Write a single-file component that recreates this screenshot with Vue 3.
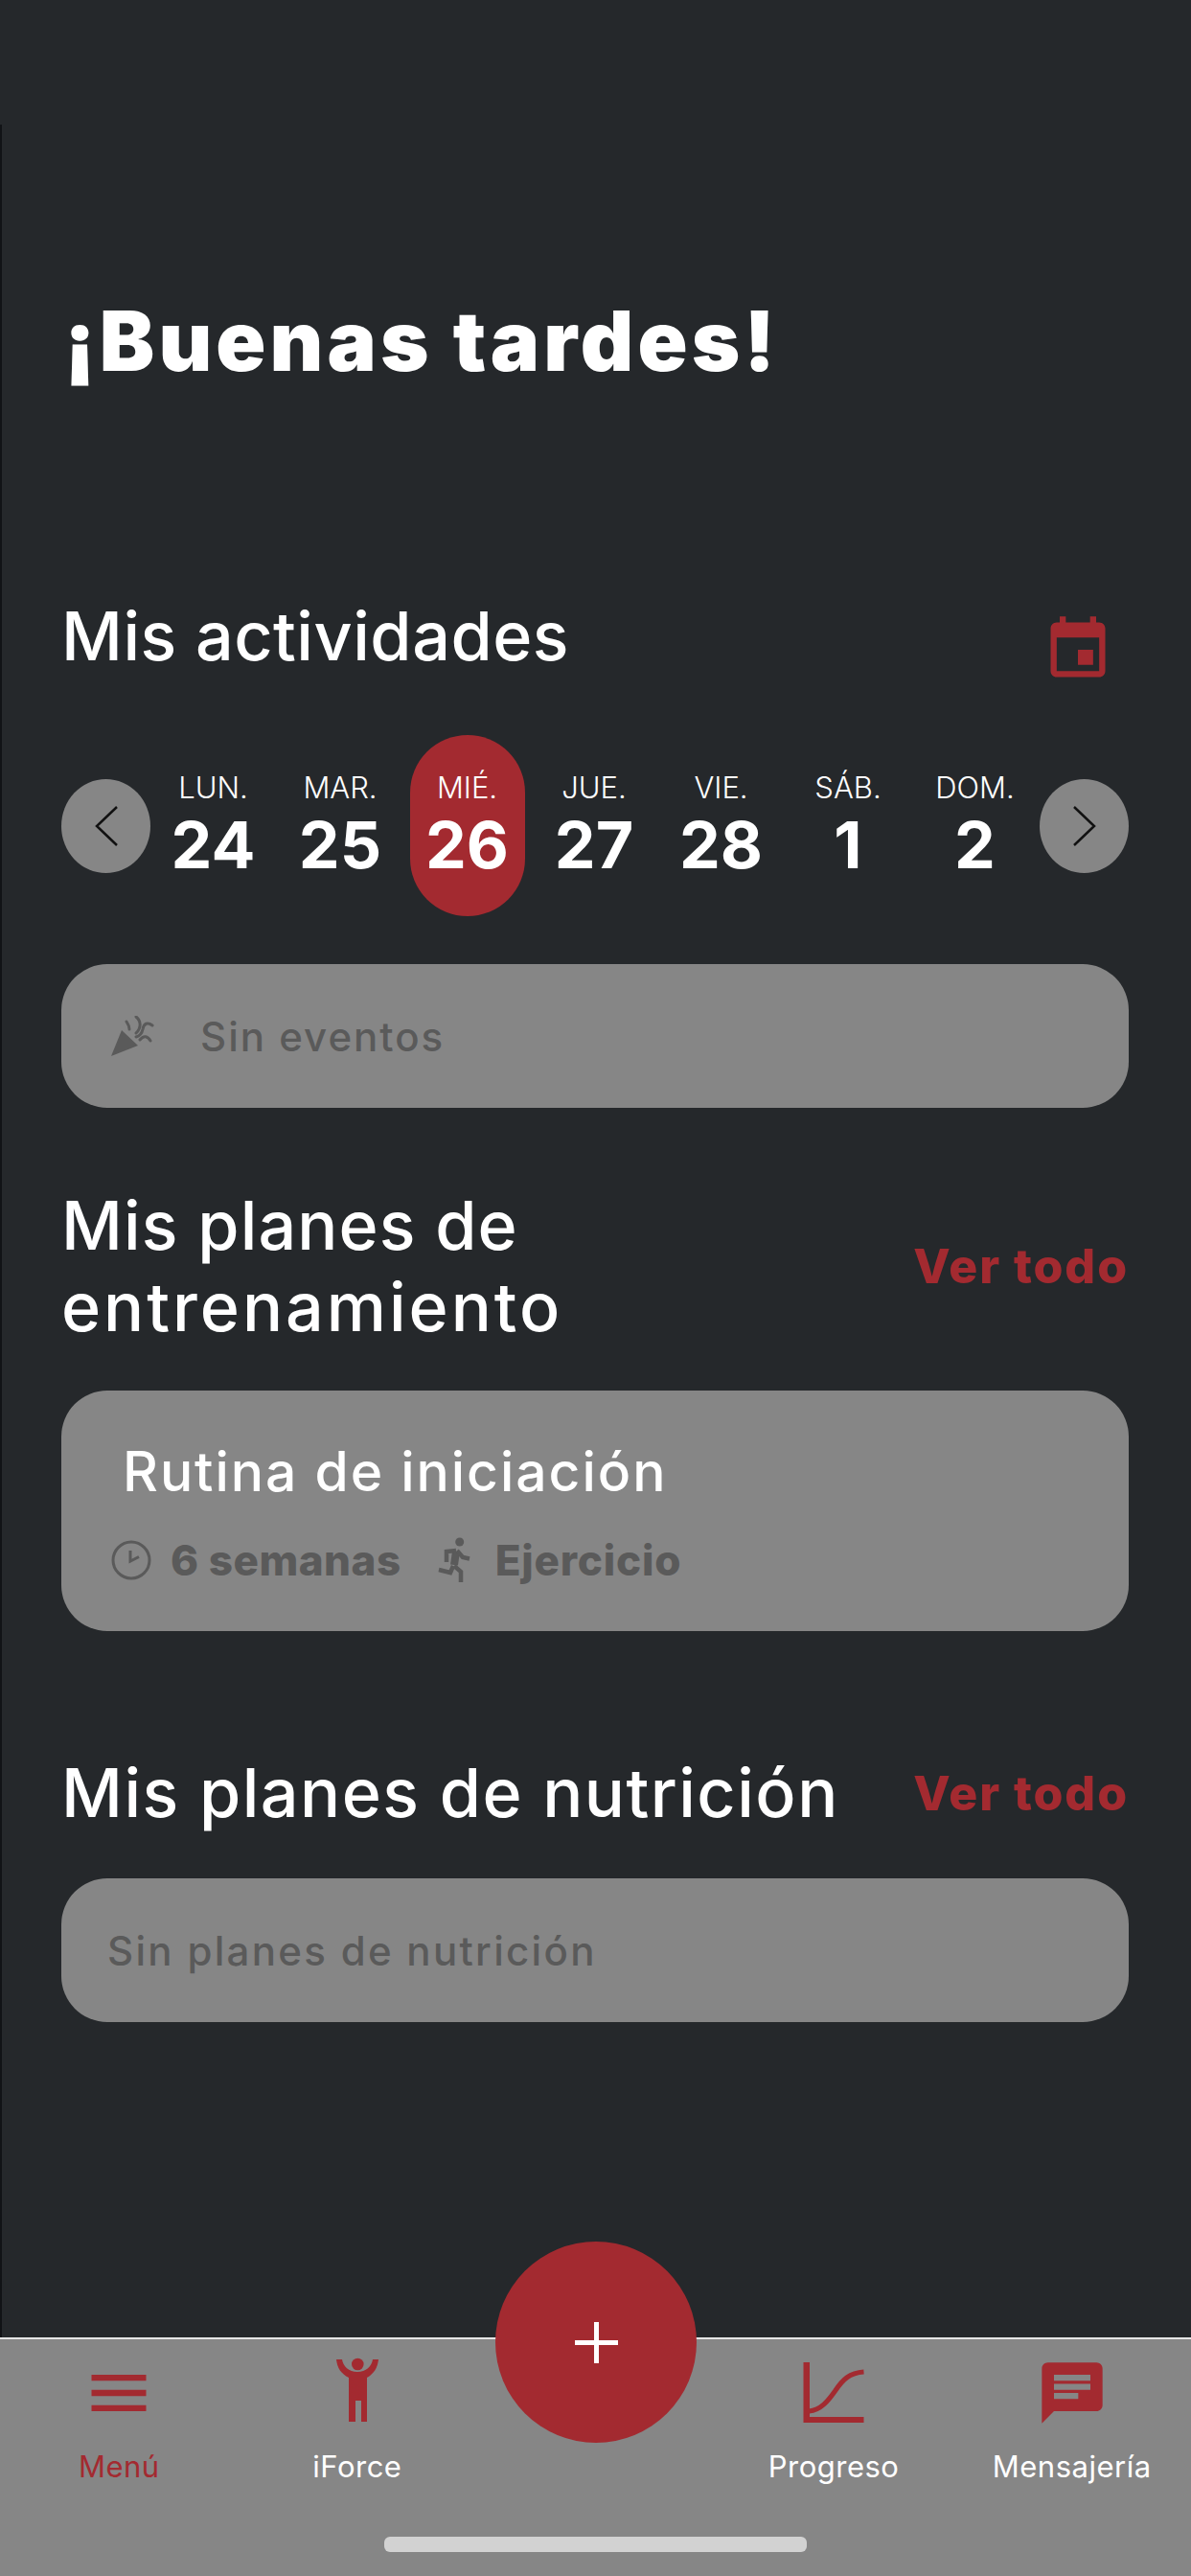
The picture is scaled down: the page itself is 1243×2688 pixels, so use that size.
<script setup>
const days = [
  { label: 'LUN.', num: '24' },
  { label: 'MAR.', num: '25' },
  { label: 'MIÉ.', num: '26', active: true },
  { label: 'JUE.', num: '27' },
  { label: 'VIE.', num: '28' },
  { label: 'SÁB.', num: '1' },
  { label: 'DOM.', num: '2' }
]
</script>

<template>
  <div class="screen">
    <main class="content">
      <h1 class="greeting">¡Buenas tardes!</h1>

      <div class="head activities">
        <h2 class="tight">Mis actividades</h2>
        <svg class="cal" viewBox="0 0 24 24"><path d="M17 12h-5v5h5v-5zM16 1v2H8V1H6v2H5c-1.11 0-1.99.9-1.99 2L3 19c0 1.1.89 2 2 2h14c1.1 0 2-.9 2-2V5c0-1.1-.9-2-2-2h-1V1h-2zm3 18H5V8h14v11z"/></svg>
      </div>

      <div class="week">
        <button class="nav"><svg width="24" height="42" viewBox="0 0 24 42"><path d="M23 1 2 21l21 20"/></svg></button>
        <div class="days">
          <div v-for="d in days" :key="d.label" class="day" :class="{ active: d.active }">
            <span class="label">{{ d.label }}</span>
            <span class="num">{{ d.num }}</span>
          </div>
        </div>
        <button class="nav"><svg width="24" height="42" viewBox="0 0 24 42"><path d="M1 1l21 20L1 41"/></svg></button>
      </div>

      <div class="card empty events">
        <svg class="party" viewBox="0 0 46 43">
          <path class="fill" d="M0 42 11 15l17 16z"/>
          <path d="M16 6c2 3 3 5 3 8M26 1c5 4 6 11 0 17M43 10c-5-4-9-2-10 4-1 5-3 7-7 8M41 26c-3-5-7-6-11-1"/>
        </svg>
        <span>Sin eventos</span>
      </div>

      <div class="head plans">
        <h2><span class="first">Mis planes de</span><br><span class="second">entrenamiento</span></h2>
        <a class="all">Ver todo</a>
      </div>

      <div class="card routine">
        <div class="routine-title">Rutina de iniciación</div>
        <div class="meta">
          <svg class="clock" viewBox="0 0 42 42"><circle cx="21" cy="21" r="19"/><path d="M20 11v11l9-4.500"/></svg>
          <span>6 semanas</span>
          <svg class="run" viewBox="0 0 36 48">
            <circle cx="22.700" cy="5" r="4.500"/>
            <path class="torso" d="M19 15 17 29"/>
            <path d="M19 14 9 15v11M20 14l6 7 7 1.500M17 30l7 6v11M16 30l-3 7-12-3"/>
          </svg>
          <span class="exercise">Ejercicio</span>
        </div>
      </div>

      <div class="head nutrition">
        <h2>Mis planes de nutrición</h2>
        <a class="all">Ver todo</a>
      </div>

      <div class="card empty nutrition-card">
        <span>Sin planes de nutrición</span>
      </div>
    </main>

    <nav class="tabbar">
      <button class="fab" aria-label="Añadir"><i class="plus"></i></button>
      <div class="tabs">
        <div class="tab current">
          <svg width="76" height="76" viewBox="0 0 24 24"><path d="M3 18h18v-2H3v2zm0-5h18v-2H3v2zm0-7v2h18V6H3z"/></svg>
          <span>Menú</span>
        </div>
        <div class="tab">
          <svg width="76" height="76" viewBox="-16 -2 76 76"><circle cx="22.300" cy="6" r="6.300"/><path d="M0 1h6c1 7 7 13 16 13s15-6 16-13h6c-1 9-5 15-12 19v46h-6V44h-6v22h-7V20C5 16 1 10 0 1z"/></svg>
          <span>iForce</span>
        </div>
        <div class="tab spacer"></div>
        <div class="tab">
          <svg width="76" height="76" viewBox="-6.500 -6 76 76"><path d="M0 0h6.500v57H63v6H0z"/><path class="curve" d="M6 51C18 50 26 40 33 30 41 18 48 11 63 10"/></svg>
          <span>Progreso</span>
        </div>
        <div class="tab">
          <svg width="76" height="76" viewBox="0 0 24 24"><path d="M20 2H4c-1.100 0-1.990.9-1.990 2L2 22l4-4h14c1.100 0 2-.9 2-2V4c0-1.100-.9-2-2-2zM6 9h12v2H6V9zm8 5H6v-2h8v2zm4-6H6V6h12v2z"/></svg>
          <span>Mensajería</span>
        </div>
      </div>
      <div class="home"></div>
    </nav>
  </div>
</template>

<style>
html, body { margin: 0; background: #25282b; }
</style>

<style scoped>
.screen {
  width: 1243px;
  height: 2688px;
  display: flex;
  flex-direction: column;
  background: #25282b;
  color: #fff;
  font-family: Inter, "Liberation Sans", sans-serif;
  overflow: hidden;
}
.content {
  flex: 1;
  margin-top: 130px;
  padding: 0 65px 0 62px;
  box-sizing: border-box;
  border-left: 2px solid #111316;
}
.greeting {
  margin: 176px 0 0 3px;
  font-size: 86px;
  line-height: 100px;
  font-weight: 900;
  letter-spacing: 4.100px;
}
h2 {
  margin: 0;
  font-size: 70px;
  line-height: 85px;
  font-weight: 500;
  letter-spacing: 1.500px;
}
h2.tight { letter-spacing: .5px; }
.first { letter-spacing: 1.100px; }
.second { letter-spacing: 3px; }
.head {
  display: flex;
  align-items: center;
  justify-content: space-between;
}
.activities { margin-top: 218px; }
.activities h2 { margin-top: -7px; margin-bottom: 7px; }
.cal { width: 76px; height: 76px; fill: #a32a30; margin-right: 15px; margin-top: 16px; }
.week {
  margin-top: 51px;
  display: flex;
  align-items: center;
  justify-content: space-between;
}
.nav {
  width: 93px;
  height: 98px;
  padding: 0;
  border: 0;
  border-radius: 50%;
  background: #868686;
  display: flex;
  align-items: center;
  justify-content: center;
}
.nav svg { fill: none; stroke: #111; stroke-width: 2.500; }
.days {
  flex: 1;
  display: grid;
  grid-template-columns: repeat(7, 132.500px);
  justify-content: center;
  margin-left: -2px;
}
.day {
  height: 189px;
  width: 120px;
  box-sizing: border-box;
  padding-bottom: 2px;
  justify-self: center;
  display: flex;
  flex-direction: column;
  align-items: center;
  justify-content: center;
  border-radius: 60px;
}
.day.active { background: #a32a30; }
.label { font-size: 31px; line-height: 40px; font-weight: 300; }
.num { font-size: 68px; line-height: 78px; font-weight: 700; }
.card {
  background: #868686;
  border-radius: 48px;
  box-sizing: border-box;
}
.empty {
  height: 150px;
  display: flex;
  align-items: center;
  color: #5a5a5a;
  font-size: 42px;
  font-weight: 500;
  letter-spacing: 2px;
}
.events { margin-top: 50px; padding-left: 52px; }
.party { width: 46px; height: 43px; margin-right: 47px; fill: none; stroke: #5a5a5a; stroke-width: 3; stroke-linecap: round; }
.party .fill { fill: #5a5a5a; stroke: none; }
.plans { margin-top: 80px; }
.all { color: #a32a30; font-size: 50px; font-weight: 800; letter-spacing: 1.900px; }
.routine { margin-top: 45px; height: 251px; padding: 50px 0 0 52px; }
.routine-title { font-size: 57px; line-height: 70px; font-weight: 500; margin-left: 12px; letter-spacing: 1.950px; }
.meta {
  margin-top: 30px;
  display: flex;
  align-items: center;
  color: #5a5a5a;
  font-size: 44px;
  font-weight: 800;
  letter-spacing: .5px;
}
.clock { width: 42px; height: 42px; margin-right: 20px; fill: none; stroke: #5a5a5a; stroke-width: 3; }
.run { width: 36px; height: 48px; margin: 0 24px 0 38px; fill: #5a5a5a; stroke: #5a5a5a; stroke-width: 4.500; }
.run path { fill: none; }
.run .torso { stroke-width: 8; }
.run circle { stroke: none; }
.exercise { letter-spacing: .8px; }
.nutrition { margin-top: 126px; }
.nutrition-card { margin-top: 47px; padding-left: 48px; letter-spacing: 2.300px; }
.tabbar {
  position: relative;
  height: 249px;
  flex: none;
  box-sizing: border-box;
  background: #868686;
  border-top: 2px solid #e6e6e6;
}
.fab {
  position: absolute;
  left: 517px;
  top: -102px;
  width: 210px;
  height: 210px;
  padding: 0;
  border: 0;
  border-radius: 50%;
  background: #a32a30;
}
.plus {
  position: absolute;
  left: 83px;
  top: 84px;
  width: 45px;
  height: 43px;
  background:
    linear-gradient(#fff, #fff) center / 100% 5px no-repeat,
    linear-gradient(#fff, #fff) center / 5px 100% no-repeat;
}
.tabs {
  display: grid;
  grid-template-columns: repeat(5, 1fr);
  padding-top: 18px;
}
.tab {
  display: flex;
  flex-direction: column;
  align-items: center;
  color: #fff;
  font-size: 31px;
  line-height: 36px;
  letter-spacing: .5px;
}
.tab svg { fill: #a32a30; display: block; margin-bottom: 21px; }
.tab .curve { fill: none; stroke: #a32a30; stroke-width: 5; }
.tab.current { color: #a32a30; }
.home {
  position: absolute;
  left: 401px;
  top: 206px;
  width: 441px;
  height: 16px;
  border-radius: 6px;
  background: #d2d2d2;
}
</style>
